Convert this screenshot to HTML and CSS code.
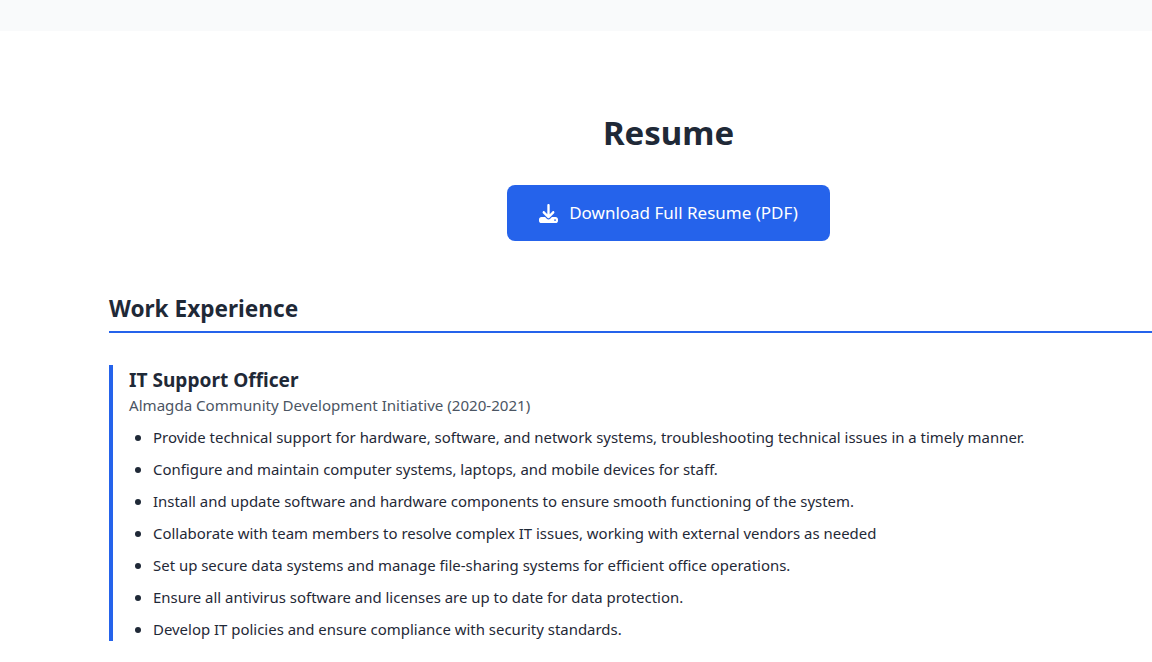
FILE: index.html
```html
<!DOCTYPE html>
<html lang="en">

<head>
    <meta charset="UTF-8">
    <meta name="viewport" content="width=device-width, initial-scale=1.0">
    <title>Resume</title>
    <link rel="stylesheet" href="styles.css">
</head>

<body>
    <div class="top-bar"></div>
    <main class="resume">
        <div class="resume-head">
            <h1>Resume</h1>
            <a class="download-btn" href="#">
                <svg class="download-icon" viewBox="0 0 512 512" width="19" height="19" aria-hidden="true">
                    <path fill="currentColor" d="M288 32c0-17.700-14.300-32-32-32s-32 14.300-32 32V274.700l-73.400-73.400c-12.500-12.500-32.800-12.500-45.300 0s-12.500 32.800 0 45.300l128 128c12.500 12.500 32.800 12.500 45.300 0l128-128c12.500-12.500 12.500-32.800 0-45.300s-32.800-12.500-45.300 0L288 274.700V32zM64 352c-35.300 0-64 28.700-64 64v32c0 35.300 28.700 64 64 64H448c35.300 0 64-28.700 64-64V416c0-35.300-28.700-64-64-64H346.500l-45.300 45.300c-25 25-65.500 25-90.500 0L165.500 352H64zm368 56a24 24 0 1 1 0 48 24 24 0 1 1 0-48z"/>
                </svg>
                Download Full Resume (PDF)
            </a>
        </div>

        <section class="section">
            <h2>Work Experience</h2>
            <div class="job">
                <h3>IT Support Officer</h3>
                <p class="job-org">Almagda Community Development Initiative (2020-2021)</p>
                <ul class="job-list">
                    <li>Provide technical support for hardware, software, and network systems, troubleshooting technical issues in a timely manner.</li>
                    <li>Configure and maintain computer systems, laptops, and mobile devices for staff.</li>
                    <li>Install and update software and hardware components to ensure smooth functioning of the system.</li>
                    <li>Collaborate with team members to resolve complex IT issues, working with external vendors as needed</li>
                    <li>Set up secure data systems and manage file-sharing systems for efficient office operations.</li>
                    <li>Ensure all antivirus software and licenses are up to date for data protection.</li>
                    <li>Develop IT policies and ensure compliance with security standards.</li>
                </ul>
            </div>
        </section>
    </main>
</body>

</html>
```

FILE: styles.css
```css
* {
    box-sizing: border-box;
}

html,
body {
    margin: 0;
}

body {
    font-family: "Noto Sans", "Open Sans", sans-serif;
    color: #1f2937;
    background-color: #fff;
    line-height: 24px;
    font-size: 14.95px;
}

.top-bar {
    height: 31px;
    background-color: #f9fafb;
}

.resume {
    margin-left: 109px;
    padding-top: 80px;
}

.resume-head {
    display: flex;
    flex-direction: column;
    align-items: center;
    padding-left: 76px;
}

h1 {
    margin: 0 0 30px;
    font-size: 33px;
    line-height: 44px;
    font-weight: 700;
}

.download-btn {
    display: flex;
    align-items: center;
    gap: 11px;
    width: 323px;
    height: 56px;
    justify-content: center;
    border-radius: 8px;
    background-color: #2563eb;
    color: #fff;
    font-size: 17px;
    text-decoration: none;
}

.section {
    margin-top: 50px;
}

h2 {
    margin: 0 0 32px;
    padding: 2px 0 6px;
    font-size: 22.6px;
    line-height: 32px;
    font-weight: 700;
    border-bottom: 2px solid #2563eb;
}

.job {
    border-left: 4px solid #2563eb;
    padding-left: 16px;
}

h3 {
    margin: 0;
    padding-top: 2px;
    font-size: 19.1px;
    line-height: 26px;
    font-weight: 700;
}

.job-org {
    margin: 0;
    font-size: 15.1px;
    color: #4b5563;
}

.job-list {
    margin: 8px 0 0;
    padding-left: 24px;
}

.job-list li {
    margin-bottom: 8px;
}

.job-list li::marker {
    font-size: 16px;
}

.job-list li:last-child {
    margin-bottom: 0;
}
```
